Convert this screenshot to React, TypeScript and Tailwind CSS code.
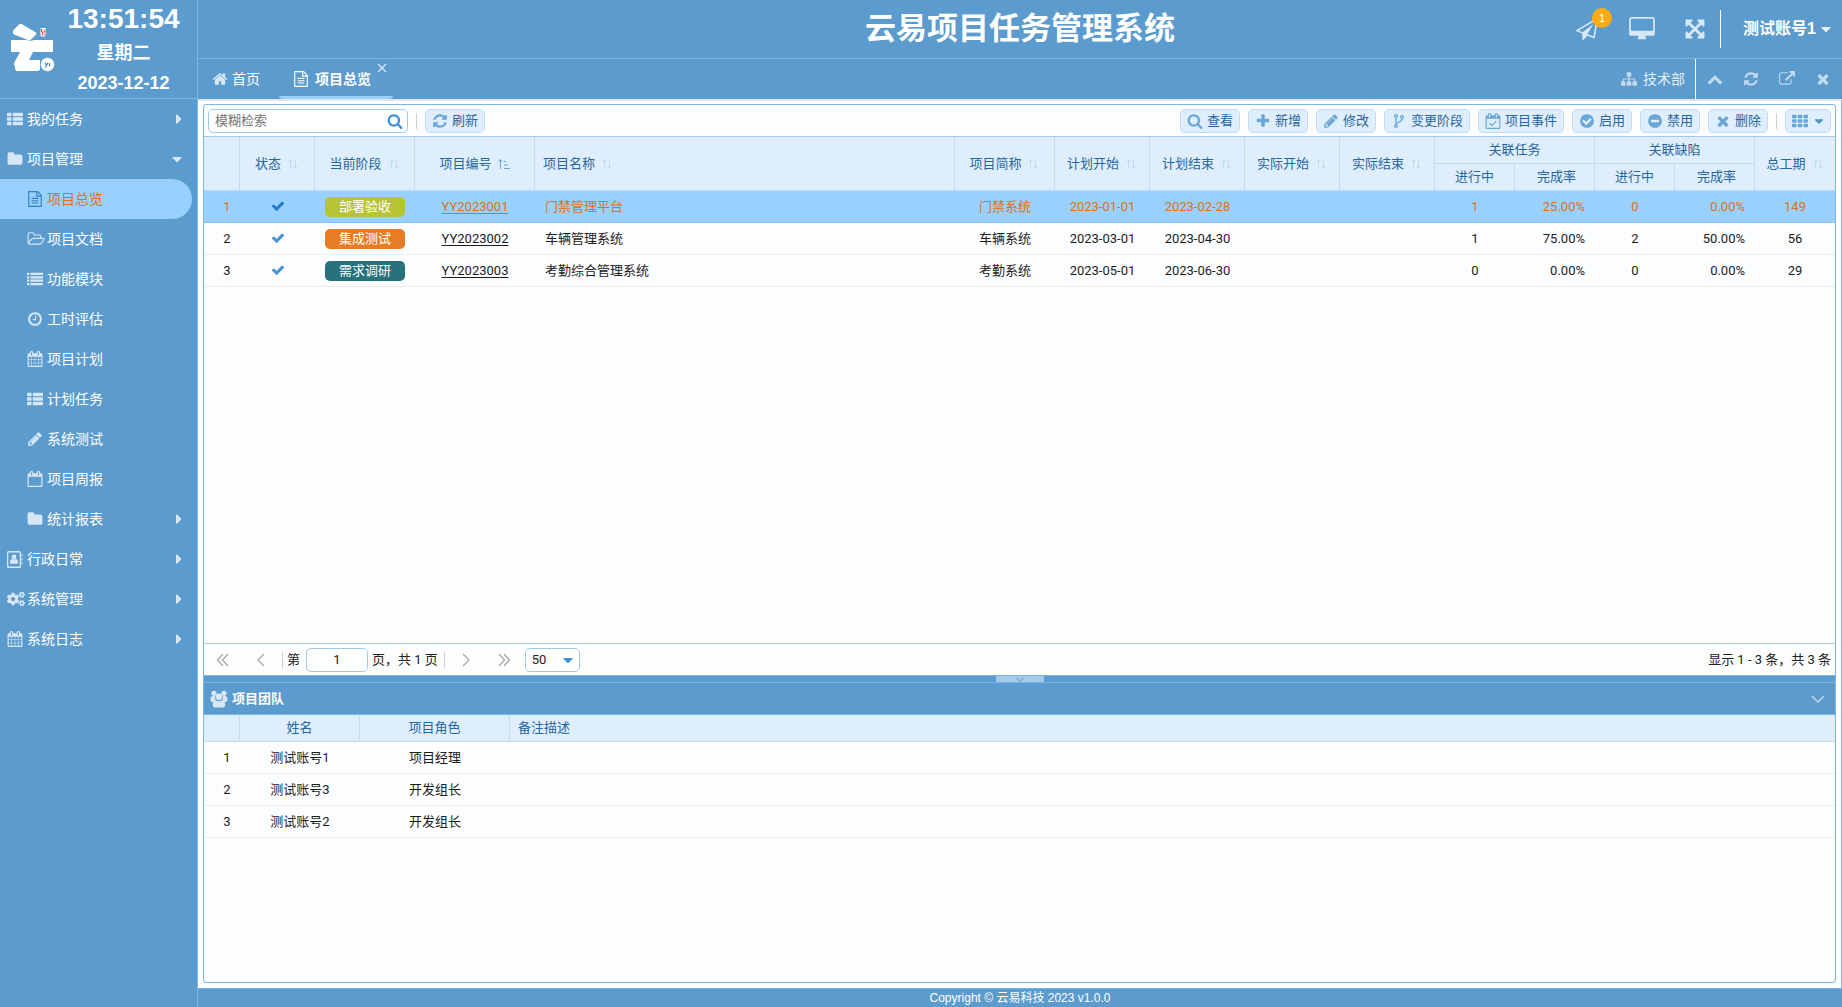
import React, { useState } from "react";
import { FaCogs, FaCaretRight, FaCaretDown } from "react-icons/fa";

const CAL =
  "zm384-64v1280q0 52-38 90t-90 38h-1408q-52 0-90-38t-38-90v-1280q0-52 38-90t90-38h128v-96q0-66 47-113t113-47h64q66 0 113 47t47 113v96h384v-96q0-66 47-113t113-47h64q66 0 113 47t47 113v96h128q52 0 90 38t38 90z";
const CAL_O =
  "M192 1664h1408v-1024h-1408v1024zm384-1216v-288q0-14-9-23t-23-9h-64q-14 0-23 9t-9 23v288q0 14 9 23t23 9h64q14 0 23-9t9-23zm768 0v-288q0-14-9-23t-23-9h-64q-14 0-23 9t-9 23v288q0 14 9 23t23 9h64q14 0 23-9t9-23" + CAL;
const DISC =
  "q0 209-103 385.5t-279.5 279.5-385.5 103-385.5-103-279.5-279.5-103-385.5 103-385.5 279.5-279.5 385.5-103 385.5 103 279.5 279.5 103 385.5z";

const cell = (x: number, y: number, w: number) =>
  `M${x + w} ${y + 96}v192q0 40-28 68t-68 28h${-(w - 192)}q-40 0-68-28t-28-68v-192q0-40 28-68t68-28h${w - 192}q40 0 68 28t28 68z`;
const ROWS = [192, 704, 1216];

const PATHS = {
  home: "M1472 992v480q0 26-19 45t-45 19h-384v-384h-256v384h-384q-26 0-45-19t-19-45v-480q0-1 .5-3t.5-3l575-474 575 474q1 2 1 6zm223-69l-62 74q-8 9-21 11h-3q-13 0-21-7l-692-577-692 577q-12 8-24 7-13-2-21-11l-62-74q-8-10-7-23.5t11-21.5l719-599q32-26 76-26t76 26l244 204v-195q0-14 9-23t23-9h192q14 0 23 9t9 23v408l219 182q10 8 11 21.5t-7 23.5z",
  file: "M1596 380q28 28 48 76t20 88v1152q0 40-28 68t-68 28h-1344q-40 0-68-28t-28-68v-1600q0-40 28-68t68-28h896q40 0 88 20t76 48zm-444-244v376h376q-10-29-22-41l-313-313q-12-12-41-22zm384 1528v-1024h-416q-40 0-68-28t-28-68v-416h-768v1536h1280zm-1024-864q0-14 9-23t23-9h704q14 0 23 9t9 23v64q0 14-9 23t-23 9h-704q-14 0-23-9t-9-23v-64zm736 224q14 0 23 9t9 23v64q0 14-9 23t-23 9h-704q-14 0-23-9t-9-23v-64q0-14 9-23t23-9h704zm0 256q14 0 23 9t9 23v64q0 14-9 23t-23 9h-704q-14 0-23-9t-9-23v-64q0-14 9-23t23-9h704z",
  thList: ROWS.map((y) => cell(0, y, 512) + cell(640, y, 1152)).join(""),
  list: "M0 192h256v256h-256zM384 192h1408v256h-1408zM0 576h256v256h-256zM384 576h1408v256h-1408zM0 960h256v256h-256zM384 960h1408v256h-1408zM0 1344h256v256h-256zM384 1344h1408v256h-1408z",
  th: ROWS.map((y) => cell(0, y, 512) + cell(640, y, 512) + cell(1280, y, 512)).join(""),
  folder: "M1728 608v704q0 92-66 158t-158 66h-1216q-92 0-158-66t-66-158v-960q0-92 66-158t158-66h320q92 0 158 66t66 158v32h672q92 0 158 66t66 158z",
  folderOpen: "M1845 931q0-35-53-35h-1088q-40 0-85.5 21.5t-71.5 52.5l-294 363q-18 24-18 40 0 35 53 35h1088q40 0 86-22t71-53l294-363q18-22 18-39zm-1141-163h768v-160q0-40-28-68t-68-28h-576q-40 0-68-28t-28-68v-64q0-40-28-68t-68-28h-320q-40 0-68 28t-28 68v853l256-315q44-53 116-87.5t140-34.5zm1269 163q0 62-46 120l-295 363q-43 53-116 87.5t-140 34.5h-1088q-92 0-158-66t-66-158v-960q0-92 66-158t158-66h320q92 0 158 66t66 158v32h544q92 0 158 66t66 158v160h192q54 0 99 24.5t67 70.5q15 32 15 68z",
  clock: "M1024 544v448q0 14-9 23t-23 9h-320q-14 0-23-9t-9-23v-64q0-14 9-23t23-9h224v-352q0-14 9-23t23-9h64q14 0 23 9t9 23zm416 352q0-148-73-273t-198-198-273-73-273 73-198 198-73 273 73 273 198 198 273 73 273-73 198-198 73-273zm224 0" + DISC,
  calendar: "M192 1664h288v-288h-288v288zm352 0h320v-288h-320v288zm-352-352h288v-320h-288v320zm352 0h320v-320h-320v320zm-352-384h288v-288h-288v288zm736 736h320v-288h-320v288zm-384-736h320v-288h-320v288zm768 736h288v-288h-288v288zm-384-352h320v-320h-320v320zm-352-864v-288q0-13-9.5-22.5t-22.5-9.5h-64q-13 0-22.5 9.5t-9.5 22.5v288q0 13 9.5 22.5t22.5 9.5h64q13 0 22.5-9.5t9.5-22.5zm736 864h288v-320h-288v320zm-384-384h320v-288h-320v288zm384 0h288v-288h-288v288zm32-480v-288q0-13-9.5-22.5t-22.5-9.5h-64q-13 0-22.5 9.5t-9.5 22.5v288q0 13 9.5 22.5t22.5 9.5h64q13 0 22.5-9.5t9.5-22.5" + CAL,
  calendarO: CAL_O,
  calendarCheck: CAL_O + "M1303 964l-512 512q-10 9-23 9t-23-9l-288-288q-9-10-9-23t9-22l46-46q9-9 22-9t23 9l220 220 444-444q10-9 23-9t22 9l46 46q9 9 9 22t-9 23z",
  pencil: "M491 1536l91-91-235-235-91 91v107h128v128h107zm523-928q0-22-22-22-10 0-17 7l-542 542q-7 7-7 17 0 22 22 22 10 0 17-7l542-542q7-7 7-17zm-54-192l416 416-832 832h-416v-416zm683 96q0 53-37 90l-166 166-416-416 166-165q36-38 90-38 53 0 91 38l235 234q37 39 37 91z",
  refresh: "M1639 1056q0 5-1 7-64 268-268 434.5t-478 166.5q-146 0-282.5-55t-243.5-157l-129 129q-19 19-45 19t-45-19-19-45v-448q0-26 19-45t45-19h448q26 0 45 19t19 45-19 45l-137 137q71 66 161 102t187 36q134 0 250-65t186-179q11-17 53-117 8-23 30-23h192q13 0 22.5 9.5t9.5 22.5zm25-800v448q0 26-19 45t-45 19h-448q-26 0-45-19t-19-45 19-45l138-138q-148-137-349-137-134 0-250 65t-186 179q-11 17-53 117-8 23-30 23h-199q-13 0-22.5-9.5t-9.5-22.5v-7q65-268 270-434.5t480-166.5q146 0 284 55.5t245 156.5l130-129q19-19 45-19t45 19 19 45z",
  search: "M1216 832q0-185-131.5-316.5t-316.5-131.5-316.5 131.5-131.5 316.5 131.5 316.5 316.5 131.5 316.5-131.5 131.5-316.5zm512 832q0 52-38 90t-90 38q-54 0-90-38l-343-342q-179 124-399 124-143 0-273.5-55.5t-225-150-150-225-55.5-273.5 55.5-273.5 150-225 225-150 273.5-55.5 273.5 55.5 225 150 150 225 55.5 273.5q0 220-124 399l343 343q37 37 37 90z",
  plus: "M1600 736v192q0 40-28 68t-68 28h-416v416q0 40-28 68t-68 28h-192q-40 0-68-28t-28-68v-416h-416q-40 0-68-28t-28-68v-192q0-40 28-68t68-28h416v-416q0-40 28-68t68-28h192q40 0 68 28t28 68v416h416q40 0 68 28t28 68z",
  check: "M1671 566q0 40-28 68l-724 724-136 136q-28 28-68 28t-68-28l-136-136-362-362q-28-28-28-68t28-68l136-136q28-28 68-28t68 28l294 295 656-657q28-28 68-28t68 28l136 136q28 28 28 68z",
  times: "M1490 1322q0 40-28 68l-136 136q-28 28-68 28t-68-28l-294-294-294 294q-28 28-68 28t-68-28l-136-136q-28-28-28-68t28-68l294-294-294-294q-28-28-28-68t28-68l136-136q28-28 68-28t68 28l294 294 294-294q28-28 68-28t68 28l136 136q28 28 28 68t-28 68l-294 294 294 294q28 28 28 68z",
  checkCircle: "M1412 734q0-28-18-46l-91-90q-19-19-45-19t-45 19l-408 407-226-226q-19-19-45-19t-45 19l-91 90q-18 18-18 46 0 27 18 45l362 362q19 19 45 19 27 0 46-19l543-543q18-18 18-45zm252 162" + DISC,
  minusCircle: "M1344 960v-128q0-26-19-45t-45-19h-768q-26 0-45 19t-19 45v128q0 26 19 45t45 19h768q26 0 45-19t19-45zm320-64" + DISC,
  external: "M1408 928v320q0 119-84.5 203.5t-203.5 84.5h-832q-119 0-203.5-84.5t-84.5-203.5v-832q0-119 84.5-203.5t203.5-84.5h704q14 0 23 9t9 23v64q0 14-9 23t-23 9h-704q-66 0-113 47t-47 113v832q0 66 47 113t113 47h832q66 0 113-47t47-113v-320q0-14 9-23t23-9h64q14 0 23 9t9 23zm384-864v512q0 26-19 45t-45 19-45-19l-176-176-652 652q-10 10-23 10t-23-10l-114-114q-10-10-10-23t10-23l652-652-176-176q-19-19-19-45t19-45 45-19h512q26 0 45 19t19 45z",
  chevronUp: "M1683 1331l-166 165q-19 19-45 19t-45-19l-531-531-531 531q-19 19-45 19t-45-19l-166-165q-19-19-19-45.5t19-45.5l742-741q19-19 45-19t45 19l742 741q19 19 19 45.5t-19 45.5z",
  sitemap: "M1792 1248v320q0 40-28 68t-68 28h-320q-40 0-68-28t-28-68v-320q0-40 28-68t68-28h96v-192h-512v192h96q40 0 68 28t28 68v320q0 40-28 68t-68 28h-320q-40 0-68-28t-28-68v-320q0-40 28-68t68-28h96v-192h-512v192h96q40 0 68 28t28 68v320q0 40-28 68t-68 28h-320q-40 0-68-28t-28-68v-320q0-40 28-68t68-28h96v-192q0-52 38-90t90-38h512v-192h-96q-40 0-68-28t-28-68v-320q0-40 28-68t68-28h320q40 0 68 28t28 68v320q0 40-28 68t-68 28h-96v192h512q52 0 90 38t38 90v192h96q40 0 68 28t28 68z",
  desktop: "M1728 992v-832q0-13-9.5-22.5t-22.5-9.5h-1600q-13 0-22.5 9.5t-9.5 22.5v832q0 13 9.5 22.5t22.5 9.5h1600q13 0 22.5-9.5t9.5-22.5zm128-832v1088q0 66-47 113t-113 47h-544q0 37 16 77.5t32 71 16 43.5q0 26-19 45t-45 19h-512q-26 0-45-19t-19-45q0-14 16-44t32-70 16-78h-544q-66 0-113-47t-47-113v-1088q0-66 47-113t113-47h1600q66 0 113 47t47 113z",
  plane: "M1764 11q33 24 27 64l-256 1536q-5 29-32 45-14 8-31 8-11 0-24-5l-527-215-298 327q-18 21-47 21-14 0-23-4-19-7-30-23.5t-11-36.5v-452l-472-193q-37-14-40-55-3-39 32-59l1664-960q35-21 68 2zm-342 1499l221-1323-1434 827 336 137 863-639-478 797z",
  arrows: "M1411 541l-355 355 355 355 144-144q29-31 70-14 39 17 39 59v448q0 26-19 45t-45 19h-448q-42 0-59-40-17-39 14-69l144-144-355-355-355 355 144 144q31 30 14 69-17 40-59 40h-448q-26 0-45-19t-19-45v-448q0-42 40-59 39-17 69 14l144 144 355-355-355-355-144 144q-19 19-45 19-12 0-24-5-40-17-40-59v-448q0-26 19-45t45-19h448q42 0 59 40 17 39-14 69l-144 144 355 355 355-355-144-144q-31-30-14-69 17-40 59-40h448q26 0 45 19t19 45v448q0 42-39 59-13 5-25 5-26 0-45-19z",
};
type IconName = keyof typeof PATHS;

function Icon({ name, className = "size-4" }: { name: IconName; className?: string }) {
  return (
    <svg viewBox="0 0 1792 1792" className={`${className} shrink-0 overflow-visible`} fill="currentColor" aria-hidden="true">
      <path d={PATHS[name]} />
    </svg>
  );
}

function Fork() {
  return (
    <svg viewBox="0 0 16 16" className="size-4" fill="none" stroke="currentColor" strokeWidth="1.3" aria-hidden="true">
      <circle cx="5" cy="3" r="1.4" />
      <circle cx="5" cy="13" r="1.4" />
      <circle cx="11" cy="4" r="1.4" />
      <path d="M5 4.500v7M11 5.500c0 3-2 3.200-4 4-1.200.5-2 1-2 2" />
    </svg>
  );
}

function AddressBook() {
  return (
    <svg viewBox="0 0 16 17" className="h-[17px] w-4" fill="currentColor" aria-hidden="true">
      <path fillRule="evenodd" d="M1.500 0h11q1.500 0 1.500 1.500v14q0 1.500-1.500 1.500h-11Q0 17 0 15.500v-14Q0 0 1.500 0zM1.300 1.500v14h11.400v-14z" />
      <path d="M14.500 3h1v2.500h-1zM14.500 7h1v2.500h-1zM14.500 11h1v2.500h-1z" />
      <circle cx="7" cy="6" r="2.400" />
      <path d="M3 11.500q0-3.500 2.200-3.500 1.800 1.200 3.600 0Q11 8 11 11.500q0 1.300-1.200 1.300H4.200Q3 12.800 3 11.500z" />
    </svg>
  );
}

function Team() {
  return (
    <svg viewBox="0 0 18 18" className="mr-1 size-[18px] text-[#d8e7f5]" fill="currentColor" aria-hidden="true">
      <circle cx="4" cy="3.300" r="2.600" />
      <circle cx="14" cy="3.300" r="2.600" />
      <path d="M.5 8.500Q.5 6 2.500 6h2.700q-.8 3 1 4.500-1.700.2-2.700 1.500H2q-1.500-.3-1.500-2zM17.500 8.500q0-2.500-2-2.500h-2.700q.8 3-1 4.500 1.700.2 2.700 1.500H16q1.500-.3 1.500-2z" />
      <circle cx="9" cy="6.800" r="3.300" />
      <path d="M2.800 14.500q0-3.800 3.200-4 3 1.600 6 0 3.200.2 3.200 4 0 3-2 3H4.800q-2 0-2-3z" />
    </svg>
  );
}

function Sort({ active = false }: { active?: boolean }) {
  return active ? (
    <svg viewBox="0 0 12 12" className="h-3 w-3 text-[#6aa7d8]" fill="none" stroke="currentColor" aria-hidden="true">
      <path d="M2.500 11V1.500M.5 3.500l2-2 2 2M6 3.500h2M6 7h4M6 10.500h6" />
    </svg>
  ) : (
    <svg viewBox="0 0 12 12" className="h-3 w-3 text-[#bfdcf2]" fill="none" stroke="currentColor" aria-hidden="true">
      <path d="M3.500 11V1.500M1.500 3.500l2-2 2 2M8.500 1v9.500M6.500 8.500l2 2 2-2" />
    </svg>
  );
}

function Chevrons({ dir, double = false }: { dir: "left" | "right"; double?: boolean }) {
  return (
    <svg viewBox="0 0 14 14" className={dir === "left" ? "size-3.5" : "size-3.5 rotate-180"} fill="none" stroke="#a8a8a8" strokeWidth="1.3" aria-hidden="true">
      {double ? <path d="M7 1L1.500 7 7 13M12 1L6.500 7l5.500 6" /> : <path d="M10 1L4 7l6 6" />}
    </svg>
  );
}

function Logo() {
  return (
    <svg viewBox="0 0 46 50" className="h-[50px] w-[46px]" aria-hidden="true">
      <path d="M3 8q0-1 1-1.500L9.500 1q1-.6 2 0L26 9.500q1 1 0 2L20.500 17q-.8.8-2 .3L4 11.500q-1-.5-1-1.500z" fill="#fff" />
      <path d="M2 17H17l3 1 4-1h18q1 0 1 1V28q0 1-1 1H23l-4 8h11v9.500q-1 1.500-3 1.500H7q-1 0-1.500-1l-1.500-6q0-1 .5-2L10 29H2q-1 0-1-1V18q0-1 1-1z" fill="#fff" />
      <rect x="30.500" y="5" width="5.500" height="8.500" rx="1" fill="#fff" />
      <path d="M31.500 9V6.500H33M35 6.500V9h-2.500v3H31.500M35 10.500V13" stroke="#ee5a62" strokeWidth="1.200" fill="none" />
      <circle cx="37.500" cy="41.500" r="7" fill="#fff" stroke="#5b9bcd" strokeWidth=".6" />
      <path d="M35 39.500l1.500 3 1.500-3M36.500 42.500l-1 2M39.500 40v3.500" stroke="#3f8fd0" strokeWidth="1.200" fill="none" />
    </svg>
  );
}

type Item = { label: string; icon: React.ReactNode; sub?: boolean; caret?: "right" | "down"; active?: boolean };
const MENU: Item[] = [
  { label: "我的任务", icon: <Icon name="thList" />, caret: "right" },
  { label: "项目管理", icon: <Icon name="folder" />, caret: "down" },
  { label: "项目总览", icon: <Icon name="file" />, sub: true, active: true },
  { label: "项目文档", icon: <Icon name="folderOpen" />, sub: true },
  { label: "功能模块", icon: <Icon name="list" />, sub: true },
  { label: "工时评估", icon: <Icon name="clock" />, sub: true },
  { label: "项目计划", icon: <Icon name="calendar" />, sub: true },
  { label: "计划任务", icon: <Icon name="thList" />, sub: true },
  { label: "系统测试", icon: <Icon name="pencil" />, sub: true },
  { label: "项目周报", icon: <Icon name="calendarO" />, sub: true },
  { label: "统计报表", icon: <Icon name="folder" />, sub: true, caret: "right" },
  { label: "行政日常", icon: <AddressBook />, caret: "right" },
  { label: "系统管理", icon: <FaCogs className="size-[18px]" />, caret: "right" },
  { label: "系统日志", icon: <Icon name="calendar" />, caret: "right" },
];

function Sidebar() {
  return (
    <aside className="flex w-[198px] shrink-0 flex-col border-r border-[#7ab5e4]">
      <div className="flex h-[99px] items-start border-b border-[#7ab5e4] pl-2.5 pt-px">
        <div className="pt-[22px]"><Logo /></div>
        <div className="flex flex-1 flex-col items-center pr-1.5 font-bold">
          <div className="h-9 text-[28px] leading-9">13:51:54</div>
          <div className="h-8 text-[18px] leading-8">星期二</div>
          <div className="h-7 text-[18px] leading-7">2023-12-12</div>
        </div>
      </div>
      <nav>
        {MENU.map((m) => (
          <a
            key={m.label}
            href="#"
            className={`flex h-10 items-center text-sm ${m.sub ? "pl-[27px]" : "pl-[7px]"} ${m.active ? "mr-[5px] rounded-r-full bg-[#98d1ff] text-[#e0700f]" : ""}`}
          >
            <span className={`flex w-5 items-center ${m.active ? "text-[#2f7fc4]" : "text-[#d8e7f5]"}`}>{m.icon}</span>
            <span>{m.label}</span>
            {m.caret && (
              <span className="ml-auto mr-3 text-[#d8e7f5]">
                {m.caret === "right" ? <FaCaretRight className="size-4 translate-x-0.5" /> : <FaCaretDown className="size-4" />}
              </span>
            )}
          </a>
        ))}
      </nav>
    </aside>
  );
}

function Header() {
  return (
    <header className="flex h-[59px] items-center border-b border-[#7ab5e4]">
      <div className="flex-1" />
      <h1 className="text-[31px] font-bold leading-10">云易项目任务管理系统</h1>
      <div className="flex flex-1 items-center justify-end text-[#d8e7f5]">
        <button className="relative mr-8" aria-label="消息">
          <Icon name="plane" className="size-[22px]" />
          <span className="absolute -right-3.5 -top-2.5 flex size-5 items-center justify-center rounded-full bg-[#fcab10] text-[11px] text-white">1</span>
        </button>
        <button className="mr-[30px]" aria-label="桌面"><Icon name="desktop" className="size-6" /></button>
        <button className="mr-3.5" aria-label="全屏"><Icon name="arrows" className="size-[22px]" /></button>
        <div className="h-[38px] w-px bg-white" />
        <button className="ml-[22px] mr-2 flex items-center gap-0.5 text-base font-bold text-white">
          测试账号1 <FaCaretDown className="size-4 text-[#e4eef8]" />
        </button>
      </div>
    </header>
  );
}

function TabBar() {
  return (
    <div className="flex h-10 items-stretch">
      <button className="flex items-center gap-1 px-3.5 text-sm"><Icon name="home" className="size-4 text-[#d8e7f5]" />首页</button>
      <div className="relative ml-[5px] flex items-stretch">
        <button className="flex items-center gap-1.5 rounded-sm border-b-[3px] border-[#98d1ff] pl-3.5 pr-[22px] pt-0.5 text-sm font-bold"><Icon name="file" className="size-4" />项目总览</button>
        <button aria-label="关闭标签" className="absolute right-1.5 top-1">
          <svg viewBox="0 0 10 10" className="size-2.5" stroke="#d8e7f5" strokeWidth="1.300" aria-hidden="true"><path d="M1 1l8 8M9 1L1 9" /></svg>
        </button>
      </div>
      <div className="ml-auto flex items-center text-[#c3daee]">
        <button className="mr-2.5 flex items-center gap-1.5 text-sm"><Icon name="sitemap" className="size-4" /><span className="text-[#e4eef8]">技术部</span></button>
        <div className="h-full w-px bg-white" />
        <div className="flex items-center gap-5 px-[11px]">
          <button aria-label="收起"><Icon name="chevronUp" /></button>
          <button aria-label="刷新页面"><Icon name="refresh" /></button>
          <button aria-label="新窗口"><Icon name="external" /></button>
          <button aria-label="关闭"><Icon name="times" /></button>
        </div>
      </div>
    </div>
  );
}

function ToolButton({ icon, children }: { icon: React.ReactNode; children: React.ReactNode }) {
  return (
    <button className="flex h-6 items-center gap-1 rounded-[5px] border border-[#c5dcf0] bg-[#dfeefc] px-1.5 text-[13px] text-[#28669f]">
      <span className="flex size-4 items-center justify-center text-[#6aa7d8]">{icon}</span>
      {children}
    </button>
  );
}

const TOOLS: [string, React.ReactNode][] = [
  ["查看", <Icon name="search" />],
  ["新增", <Icon name="plus" />],
  ["修改", <Icon name="pencil" />],
  ["变更阶段", <Fork />],
  ["项目事件", <Icon name="calendarCheck" />],
  ["启用", <Icon name="checkCircle" />],
  ["禁用", <Icon name="minusCircle" />],
  ["删除", <Icon name="times" />],
];

function Toolbar() {
  return (
    <div className="flex h-8 items-center border-b border-[#a5c9e6] px-1">
      <label className="flex h-6 w-[200px] items-center rounded-[5px] border border-[#a3c9e8] bg-white pl-1.5 pr-1">
        <input type="text" aria-label="模糊检索" placeholder="模糊检索" className="w-0 flex-1 text-[13px] text-[#222] outline-none placeholder:text-[#757575]" />
        <Icon name="search" className="size-4 text-[#3f92d8]" />
      </label>
      <div className="mx-2 h-4 w-px bg-[#cfcfcf]" />
      <ToolButton icon={<Icon name="refresh" />}>刷新</ToolButton>
      <div className="ml-auto flex items-center gap-2">
        {TOOLS.map(([label, icon]) => (
          <ToolButton key={label} icon={icon}>{label}</ToolButton>
        ))}
        <div className="h-4 w-px bg-[#cfcfcf]" />
        <button aria-label="列设置" className="flex h-6 items-center gap-1 rounded-[5px] border border-[#c5dcf0] bg-[#dfeefc] pl-1.5 pr-1 text-[#6aa7d8]">
          <Icon name="th" /><FaCaretDown className="size-3.5 text-[#4f93cd]" />
        </button>
      </div>
    </div>
  );
}

const TH = "border-b border-r border-[#c3dcf0] font-normal last:border-r-0";

function Head({ label, sort = true, left, active }: { label: string; sort?: boolean; left?: boolean; active?: boolean }) {
  return (
    <div className={`flex items-center gap-1.5 ${left ? "justify-start pl-2" : "justify-center"}`}>
      {label}
      {sort && <Sort active={active} />}
    </div>
  );
}

const PROJECTS = [
  { stage: "部署验收", color: "bg-[#b5c334]", code: "YY2023001", name: "门禁管理平台", abbr: "门禁系统", start: "2023-01-01", end: "2023-02-28", t: "1", tp: "25.00%", b: "0", bp: "0.00%", days: "149" },
  { stage: "集成测试", color: "bg-[#e87c25]", code: "YY2023002", name: "车辆管理系统", abbr: "车辆系统", start: "2023-03-01", end: "2023-04-30", t: "1", tp: "75.00%", b: "2", bp: "50.00%", days: "56" },
  { stage: "需求调研", color: "bg-[#27727b]", code: "YY2023003", name: "考勤综合管理系统", abbr: "考勤系统", start: "2023-05-01", end: "2023-06-30", t: "0", tp: "0.00%", b: "0", bp: "0.00%", days: "29" },
];

function ProjectTable() {
  return (
    <table className="w-full table-fixed border-separate border-spacing-0 text-[13px]">
      <colgroup>
        <col className="w-9" /><col className="w-[75px]" /><col className="w-[100px]" /><col className="w-[120px]" /><col />
        <col className="w-[100px]" /><col className="w-[95px]" /><col className="w-[95px]" /><col className="w-[95px]" /><col className="w-[95px]" />
        <col className="w-20" /><col className="w-20" /><col className="w-20" /><col className="w-20" /><col className="w-20" />
      </colgroup>
      <thead className="bg-[#dfeefc] text-[#28669f]">
        <tr className="h-[27px]">
          <th rowSpan={2} className={TH} aria-label="序号" />
          <th rowSpan={2} className={TH}><Head label="状态" /></th>
          <th rowSpan={2} className={TH}><Head label="当前阶段" /></th>
          <th rowSpan={2} className={TH}><Head label="项目编号" active /></th>
          <th rowSpan={2} className={TH}><Head label="项目名称" left /></th>
          <th rowSpan={2} className={TH}><Head label="项目简称" /></th>
          <th rowSpan={2} className={TH}><Head label="计划开始" /></th>
          <th rowSpan={2} className={TH}><Head label="计划结束" /></th>
          <th rowSpan={2} className={TH}><Head label="实际开始" /></th>
          <th rowSpan={2} className={TH}><Head label="实际结束" /></th>
          <th colSpan={2} className={TH}>关联任务</th>
          <th colSpan={2} className={TH}>关联缺陷</th>
          <th rowSpan={2} className={TH}><Head label="总工期" /></th>
        </tr>
        <tr className="h-[27px]">
          <th className={TH}>进行中</th>
          <th className={TH}><span className="pl-1">完成率</span></th>
          <th className={TH}>进行中</th>
          <th className="border-b border-r border-[#c3dcf0] font-normal"><span className="pl-1">完成率</span></th>
        </tr>
      </thead>
      <tbody>
        {PROJECTS.map((p, i) => (
          <tr
            key={p.code}
            className={`h-8 text-center ${i === 0 ? "bg-[#98d1ff] text-[#e0700f] [&>td]:border-[#85c3f3]" : "bg-[#fcfdfe] text-[#1c1c1c] [&>td]:border-[#ededed]"} [&>td]:border-b`}
          >
            <td className="pl-2.5">{i + 1}</td>
            <td className="pb-0.5"><Icon name="check" className={i === 0 ? "mx-auto size-3.5 text-[#1f7ac8]" : "mx-auto size-3.5 text-[#3f92d8]"} /></td>
            <td><span className={`mx-auto block h-5 w-20 rounded-[5px] leading-5 text-white ${p.color}`}>{p.stage}</span></td>
            <td><a href="#" className="underline underline-offset-2">{p.code}</a></td>
            <td className="pl-2.5 text-left">{p.name}</td>
            <td>{p.abbr}</td>
            <td>{p.start}</td>
            <td>{p.end}</td>
            <td />
            <td />
            <td>{p.t}</td>
            <td className="pr-2.5 text-right">{p.tp}</td>
            <td>{p.b}</td>
            <td className="pr-2.5 text-right">{p.bp}</td>
            <td>{p.days}</td>
          </tr>
        ))}
      </tbody>
    </table>
  );
}

function Pager() {
  const [page, setPage] = useState("1");
  return (
    <div className="flex h-8 items-center border-t border-[#a5c9e6] px-1 text-[13px] text-[#222]">
      <button aria-label="首页" className="ml-2"><Chevrons dir="left" double /></button>
      <button aria-label="上一页" className="ml-6"><Chevrons dir="left" /></button>
      <div className="ml-3.5 mr-1 h-4 w-px bg-[#cfcfcf]" />
      <label className="flex items-center gap-1.5">第
        <input value={page} onChange={(e) => setPage(e.target.value)} className="h-6 w-[62px] rounded-[5px] border border-[#a3c9e8] bg-white text-center outline-none" />
      </label>
      <span className="ml-1">页，共 1 页</span>
      <div className="ml-1.5 h-4 w-px bg-[#cfcfcf]" />
      <button aria-label="下一页" className="ml-3.5"><Chevrons dir="right" /></button>
      <button aria-label="末页" className="ml-6"><Chevrons dir="right" double /></button>
      <div className="relative ml-3.5">
        <select aria-label="每页条数" defaultValue="50" className="h-6 w-[55px] appearance-none rounded-[5px] border border-[#a3c9e8] bg-white pl-1.5 outline-none">
          <option>20</option>
          <option>50</option>
          <option>100</option>
        </select>
        <FaCaretDown className="pointer-events-none absolute right-1 top-1 size-4 text-[#3f92d8]" />
      </div>
      <span className="ml-auto">显示 1 - 3 条，共 3 条</span>
    </div>
  );
}

const TEAM = [
  ["测试账号1", "项目经理"],
  ["测试账号3", "开发组长"],
  ["测试账号2", "开发组长"],
];

function TeamPanel() {
  return (
    <section className="flex h-[300px] shrink-0 flex-col">
      <div className="flex h-[33px] items-center border-y border-[#7ab5e4] bg-[#5b9bcd] px-1.5 text-[13px] font-bold text-white">
        <Team />
        项目团队
        <button aria-label="折叠" className="ml-auto mr-1">
          <svg viewBox="0 0 14 8" className="h-2 w-3.5" fill="none" stroke="#c3daee" strokeWidth="1.500" aria-hidden="true"><path d="M1 1l6 6 6-6" /></svg>
        </button>
      </div>
      <table className="w-full table-fixed border-separate border-spacing-0 text-[13px]">
        <colgroup><col className="w-9" /><col className="w-[120px]" /><col className="w-[150px]" /><col /></colgroup>
        <thead className="bg-[#dfeefc] text-[#28669f]">
          <tr className="h-[27px]">
            <th className={TH} aria-label="序号" />
            <th className={TH}>姓名</th>
            <th className={TH}>项目角色</th>
            <th className={`${TH} pl-2 text-left`}>备注描述</th>
          </tr>
        </thead>
        <tbody>
          {TEAM.map(([name, role]  , i) => (
            <tr key={name} className="h-8 bg-[#fcfdfe] text-center text-[#1c1c1c] [&>td]:border-b [&>td]:border-[#ededed]">
              <td className="pl-2.5">{i + 1}</td><td>{name}</td><td>{role}</td><td />
            </tr>
          ))}
        </tbody>
      </table>
    </section>
  );
}

export default function App() {
  return (
    <div className="flex h-screen bg-[#5b9bcd] font-['Liberation_Sans','Noto_Sans_CJK_SC',sans-serif] text-white">
      <Sidebar />
      <div className="flex min-w-0 flex-1 flex-col">
        <Header />
        <TabBar />
        <main className="flex min-h-0 flex-1 flex-col border-r border-t-2 border-r-[#7ab5e4] border-t-[#e4e6ea] bg-white px-[5px] pb-[5px] pt-[3px] font-['Roboto','Noto_Sans_CJK_SC',sans-serif]">
          <div className="flex min-h-0 flex-1 flex-col rounded-[3px] border border-[#7ab5e4] bg-[#fcfefe]">
            <Toolbar />
            <div className="min-h-0 flex-1 overflow-hidden"><ProjectTable /></div>
            <Pager />
            <div className="flex h-[7px] shrink-0 items-end justify-center border-t border-[#7ab5e4] bg-[#5b9bcd]">
              <button aria-label="收起下方面板" className="flex h-1.5 w-12 items-center justify-center bg-[#a6cbea]">
                <svg viewBox="0 0 10 5" className="h-[5px] w-2.5" fill="none" stroke="#5b9bcd" aria-hidden="true"><path d="M1 .5l4 4 4-4" /></svg>
              </button>
            </div>
            <TeamPanel />
          </div>
        </main>
        <footer className="flex h-[19px] items-center justify-center border-t border-[#7ab5e4] text-xs">Copyright © 云易科技 2023 v1.0.0</footer>
      </div>
    </div>
  );
}
